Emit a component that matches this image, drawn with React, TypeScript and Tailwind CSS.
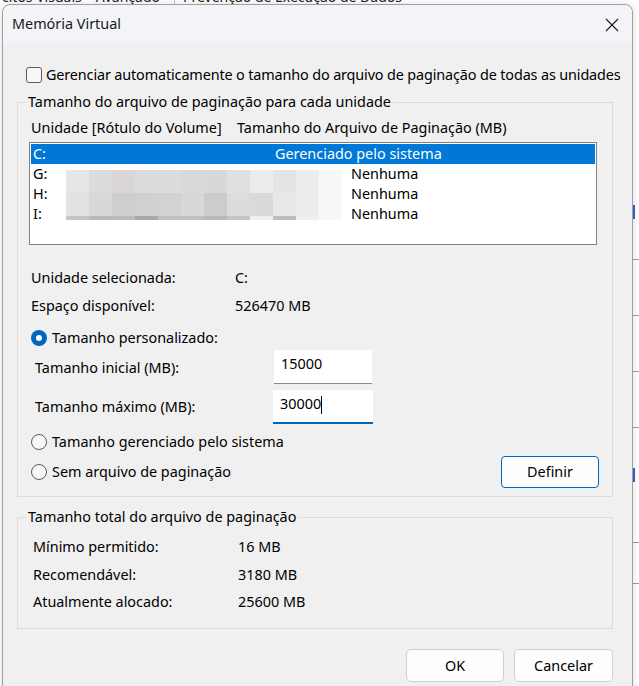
import React from "react";

const mosaic: string[][] = [
  ["#e6e6e6", "#dcdcdc", "#dad6d6", "#dcdcdc", "#dcdcdc", "#d9d9d9", "#d8d8d8", "#e0e0e0", "#ececec", "#e4e4e4", "#ececec", "#f8f8f8"],
  ["#e2e2e2", "#d8d8d8", "#cecece", "#d0d0d0", "#d2d2d2", "#d8d8d8", "#cccccc", "#dcdcdc", "#dadada", "#e8e8e8", "#ececec", "#f8f8f8"],
  ["#c8c4c4", "#bdb7b7", "#b8bcc0", "#a8a8a8", "#c0c0c0", "#c0c0c0", "#b8b8b8", "#c4c4c4", "#f0f0f0", "#bcbcbc", "#f0f0f0", "#f8f8f8"],
];
const mosaicHeights = [23, 23, 4];

function Radio({ checked }: { checked?: boolean }) {
  if (checked) {
    return (
      <span className="flex h-[16px] w-[16px] shrink-0 items-center justify-center rounded-full bg-[#0067c0]">
        <span className="h-[6px] w-[6px] rounded-full bg-white" />
      </span>
    );
  }
  return <span className="h-[16px] w-[16px] shrink-0 rounded-full border border-[#5c5c5c] bg-[#f7f7f7]" />;
}

export default function App() {
  return (
    <div
      className="relative h-[686px] w-[639px] overflow-hidden bg-white text-[14.4px] text-black"
      style={{ fontFamily: '"Noto Sans", "Open Sans", sans-serif' }}
    >
      {/* background window (behind the dialog) */}
      <div className="absolute left-0 top-[-11px] flex h-[16px] items-center gap-[14px] whitespace-nowrap pl-[2px] text-[14px] leading-[16px] text-[#222]">
        <span>citos Visuais</span>
        <span>Avançado</span>
        <span className="border-l border-[#c8c8c8] pl-[8px]">Prevenção de Execução de Dados</span>
      </div>
      <div className="absolute right-0 top-0 flex h-full w-[6px] flex-col">
        <div className="mt-[205px] h-[14px] w-[2px] bg-[#3a5fcf]" />
        <div className="mt-[40px] h-px w-full bg-[#9a9a9a]" />
        <div className="mt-[55px] h-px w-full bg-[#9a9a9a]" />
        <div className="mt-[55px] h-px w-full bg-[#9a9a9a]" />
        <div className="mt-[55px] h-px w-full bg-[#9a9a9a]" />
        <div className="mt-[40px] h-[14px] w-[2px] bg-[#3a5fcf]" />
        <div className="mt-[60px] h-px w-full bg-[#9a9a9a]" />
        <div className="mt-[40px] h-px w-full bg-[#9a9a9a]" />
      </div>

      {/* dialog window */}
      <div className="absolute left-[2px] top-[4px] flex h-[700px] w-[631px] flex-col rounded-t-[8px] border border-[#a0a0a0] bg-[#f0f0f0] shadow-[0_0_6px_rgba(0,0,0,0.15)]">
        {/* title bar */}
        <div className="flex h-[38px] items-center justify-between rounded-t-[8px] bg-[#f3f4f8] pl-[9px] pr-[13px]">
          <span className="text-[14.4px] text-[#1a1a1a]">Memória Virtual</span>
          <svg width="14" height="14" viewBox="0 0 14 14" className="mt-[1px]">
            <path d="M1 1 L13 13 M13 1 L1 13" stroke="#1a1a1a" strokeWidth="1.1" fill="none" />
          </svg>
        </div>

        {/* body */}
        <div className="flex flex-col pl-[14px] pr-[19px]">
          <label className="ml-[9px] mt-[23px] flex h-[18px] items-center gap-[4px] whitespace-nowrap leading-[18px]">
            <span className="h-[16px] w-[16px] shrink-0 rounded-[3px] border border-[#5c5c5c] bg-[#f7f7f7]" />
            <span className="tracking-[-0.13px]">Gerenciar automaticamente o tamanho do arquivo de paginação de todas as unidades</span>
          </label>

          {/* group 1 */}
          <fieldset className="mt-[8px] w-[596px] border border-[#dcdcdc] px-0 pb-[8px]">
            <legend className="ml-[8px] px-[2px] leading-[20px]">Tamanho do arquivo de paginação para cada unidade</legend>

            <div className="ml-[13px] mt-[6px] flex h-[20px] items-center leading-[20px]">
              <span className="w-[206px]">Unidade [Rótulo do Volume]</span>
              <span>Tamanho do Arquivo de Paginação (MB)</span>
            </div>

            <div className="relative ml-[11px] mt-[4px] h-[103px] w-[568px] border border-[#828282] bg-white p-px">
              <div className="flex h-[20px] items-center bg-[#0078d7] text-white">
                <span className="ml-[2px] w-[242px]">C:</span>
                <span>Gerenciado pelo sistema</span>
              </div>
              {["G:", "H:", "I:"].map((d) => (
                <div key={d} className="flex h-[20px] items-center">
                  <span className="ml-[2px] w-[318px]">{d}</span>
                  <span>Nenhuma</span>
                </div>
              ))}
              {/* privacy mosaic over the volume labels */}
              <div className="absolute left-[36px] top-[27px] flex flex-col">
                {mosaic.map((row, ri) => (
                  <div key={ri} className="flex">
                    {row.map((c, ci) => (
                      <div key={ci} style={{ backgroundColor: c, height: mosaicHeights[ri] }} className="w-[23px]" />
                    ))}
                  </div>
                ))}
              </div>
            </div>

            <div className="ml-[13px] mt-[23px] flex h-[20px] items-center">
              <span className="w-[204px]">Unidade selecionada:</span>
              <span>C:</span>
            </div>
            <div className="ml-[13px] mt-[8px] flex h-[20px] items-center">
              <span className="w-[204px]">Espaço disponível:</span>
              <span>526470 MB</span>
            </div>

            <div className="ml-[13px] mt-[12px] flex h-[20px] items-center gap-[5px]">
              <Radio checked />
              <span>Tamanho personalizado:</span>
            </div>

            <div className="ml-[17px] mt-[2px] flex h-[34px] items-center">
              <span className="mt-[2px] w-[239px]">Tamanho inicial (MB):</span>
              <div className="flex h-[34px] w-[98px] items-start border-b border-[#8a8a8a] bg-white pl-[7px] pt-[3px]">
                15000
              </div>
            </div>
            <div className="ml-[17px] mt-[6px] flex h-[34px] items-center">
              <span className="w-[238px]">Tamanho máximo (MB):</span>
              <div className="flex h-[34px] w-[100px] items-start border-b-2 border-[#0067c0] bg-white pl-[7px] pt-[3px]">
                30000
                <span className="mt-[3px] h-[18px] w-px bg-black" />
              </div>
            </div>

            <div className="ml-[13px] mt-[8px] flex h-[20px] items-center gap-[5px]">
              <Radio />
              <span>Tamanho gerenciado pelo sistema</span>
            </div>
            <div className="ml-[13px] mt-[4px] flex h-[32px] items-center">
              <div className="flex items-center gap-[5px]">
                <Radio />
                <span>Sem arquivo de paginação</span>
              </div>
              <button className="ml-auto mr-[13px] h-[32px] w-[98px] rounded-[4px] border border-[#0067c0] bg-[#fdfdfd] text-[14.4px]">
                Definir
              </button>
            </div>
          </fieldset>

          {/* group 2 */}
          <fieldset className="mt-[10px] w-[596px] border border-[#dcdcdc] px-0 pb-[16px]">
            <legend className="ml-[8px] px-[2px] leading-[20px]">Tamanho total do arquivo de paginação</legend>
            <div className="ml-[15px] mt-[10px] flex h-[20px] items-center">
              <span className="w-[205px]">Mínimo permitido:</span>
              <span>16 MB</span>
            </div>
            <div className="ml-[15px] mt-[8px] flex h-[20px] items-center">
              <span className="w-[205px]">Recomendável:</span>
              <span>3180 MB</span>
            </div>
            <div className="ml-[15px] mt-[7px] flex h-[20px] items-center">
              <span className="w-[205px]">Atualmente alocado:</span>
              <span>25600 MB</span>
            </div>
          </fieldset>

          <div className="mt-[20px] flex justify-end gap-[10px] pr-0">
            <button className="h-[33px] w-[98px] rounded-[5px] border border-[#d0d0d0] bg-[#fdfdfd] text-[14.4px]">OK</button>
            <button className="h-[33px] w-[99px] rounded-[5px] border border-[#d0d0d0] bg-[#fdfdfd] text-[14.4px]">Cancelar</button>
          </div>
        </div>
      </div>
    </div>
  );
}
